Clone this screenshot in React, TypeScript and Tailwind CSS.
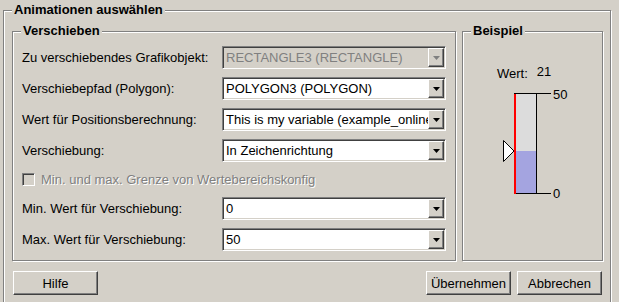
import React from 'react';

const sunken = 'border border-t-[#808080] border-l-[#808080] border-b-white border-r-white shadow-[inset_1px_1px_0_#404040,inset_-1px_-1px_0_#d4d0c8]';
const raised = 'border border-t-white border-l-white border-b-[#404040] border-r-[#404040] shadow-[inset_-1px_-1px_0_#808080]';

function GroupBox({ title, className, children }: { title: string; className: string; children?: React.ReactNode }) {
  return (
    <div className={`relative border border-[#808080] shadow-[inset_1px_1px_0_#fff,1px_1px_0_#fff] ${className}`}>
      <span className="absolute -top-[9px] left-[8px] bg-[#d4d0c8] px-[2px] font-bold leading-[16px]">{title}</span>
      {children}
    </div>
  );
}

function Combo({ value, disabled }: { value: string; disabled?: boolean }) {
  return (
    <div className={`flex w-[224px] h-[23px] ${sunken} ${disabled ? 'bg-[#d4d0c8] text-[#808080]' : 'bg-white text-black'}`}>
      <div className="flex-1 overflow-hidden whitespace-nowrap pl-[3px] pt-[3px] leading-[15px]">{value}</div>
      <div className={`w-[16px] h-[19px] mt-[1px] mr-[1px] flex items-center justify-center bg-[#d4d0c8] ${raised}`}>
        <svg width="7" height="4" viewBox="0 0 7 4">
          <polygon points="0,0 7,0 3.5,4" fill={disabled ? '#808080' : '#000'} />
        </svg>
      </div>
    </div>
  );
}

function Row({ label, value, disabled, className = '' }: { label: string; value: string; disabled?: boolean; className?: string }) {
  return (
    <div className={`flex items-center ${className}`}>
      <span className="w-[200px]">{label}</span>
      <Combo value={value} disabled={disabled} />
    </div>
  );
}

function Button({ label, className = '' }: { label: string; className?: string }) {
  return (
    <button className={`w-[85px] h-[24px] bg-[#d4d0c8] text-black leading-[15px] ${raised} ${className}`}>{label}</button>
  );
}

function Gauge() {
  return (
    <svg width="80" height="120" viewBox="0 0 80 120" className="ml-[35px] mt-[4px] block">
      <rect x="16" y="8" width="22" height="100" fill="#dcdcdc" />
      <rect x="16" y="66" width="22" height="42" fill="#a4a4e0" />
      <line x1="16" y1="8.5" x2="53" y2="8.5" stroke="#000" />
      <line x1="16" y1="108.5" x2="53" y2="108.5" stroke="#000" />
      <line x1="38.5" y1="8" x2="38.5" y2="109" stroke="#000" />
      <rect x="16" y="9" width="2" height="100" fill="#ff0000" />
      <polygon points="5.5,55.5 16,66 5.5,76.5" fill="#fff" stroke="#000" />
      <text x="55" y="14" fontSize="13" fontFamily="Liberation Sans, Arial, sans-serif" fill="#000">50</text>
      <text x="55" y="113" fontSize="13" fontFamily="Liberation Sans, Arial, sans-serif" fill="#000">0</text>
    </svg>
  );
}

export default function App() {
  return (
    <div className="w-[619px] h-[302px] overflow-hidden bg-[#d4d0c8] pt-[10px] pl-[3px] font-['Liberation_Sans',Arial,sans-serif] text-[13px] leading-[15px] text-black">
      <GroupBox title="Animationen auswählen" className="w-[608px] h-[300px] pl-[8px] pt-[20px]">
        <div className="flex gap-[6px]">
          <GroupBox title="Verschieben" className="w-[444px] h-[230px] pl-[9px] pt-[14px]">
            <div className="flex flex-col gap-[8px]">
              <Row label="Zu verschiebendes Grafikobjekt:" value="RECTANGLE3 (RECTANGLE)" disabled />
              <Row label="Verschiebepfad (Polygon):" value="POLYGON3 (POLYGON)" />
              <Row label="Wert für Positionsberechnung:" value="This is my variable (example_online_variable)" />
              <Row label="Verschiebung:" value="In Zeichenrichtung" />
            </div>
            <div className="flex items-center gap-[6px] mt-[11px] h-[13px] text-[#808080] [text-shadow:1px_1px_0_#fff]">
              <span className={`w-[13px] h-[13px] bg-[#d4d0c8] ${sunken}`} />
              <span>Min. und max. Grenze von Wertebereichskonfig</span>
            </div>
            <div className="flex flex-col gap-[8px] mt-[11px]">
              <Row label="Min. Wert für Verschiebung:" value="0" />
              <Row label="Max. Wert für Verschiebung:" value="50" />
            </div>
          </GroupBox>
          <GroupBox title="Beispiel" className="w-[141px] h-[230px] pt-[34px]">
            <div className="flex ml-[34px] gap-[9px]">
              <span>Wert:</span>
              <span className="-mt-[2px]">21</span>
            </div>
            <Gauge />
          </GroupBox>
        </div>
        <div className="flex w-[591px] mt-[10px]">
          <Button label="Hilfe" className="ml-[1px]" />
          <div className="flex-1" />
          <Button label="Übernehmen" />
          <Button label="Abbrechen" className="ml-[6px] mr-[1px]" />
        </div>
      </GroupBox>
    </div>
  );
}
